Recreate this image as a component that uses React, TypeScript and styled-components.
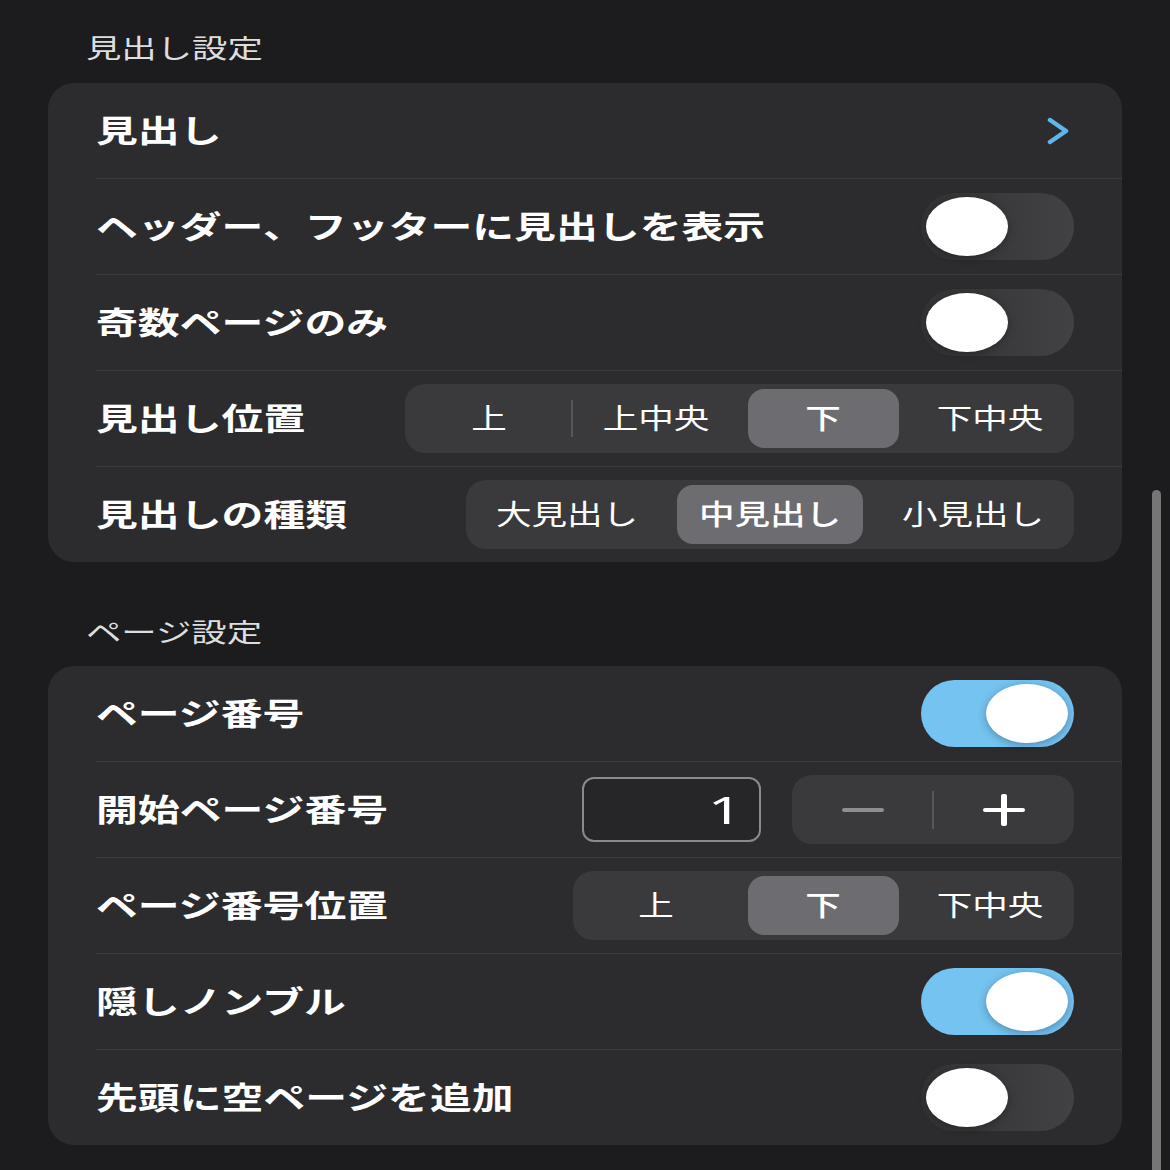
import React from 'react'
import styled, { createGlobalStyle } from 'styled-components'

const GlobalStyle = createGlobalStyle`
body{
    margin:0;
    background:#1c1c1e;
    font-family:"Noto Sans CJK JP","Noto Sans",sans-serif;
    color:#fff;
}
`

type Option = { label: string; active?: boolean; divider?: boolean }

function Toggle({ on }: { on: boolean }) {
    return (
        <Track $on={on}>
            <Knob />
        </Track>
    )
}

function SegmentedControl({ width, options }: { width: number; options: Option[] }) {
    return (
        <Segmented $width={width}>
            {options.map((o) => (
                <Segment key={o.label} $active={o.active} $divider={o.divider}>
                    <SegmentText>{o.label}</SegmentText>
                </Segment>
            ))}
        </Segmented>
    )
}

function Chevron() {
    return (
        <ChevronIcon width="24" height="28" viewBox="0 0 24 28">
            <polyline points="4,3 20,14 4,25" fill="none" stroke="#62b5ea" strokeWidth="4.5" strokeLinecap="round" strokeLinejoin="round" />
        </ChevronIcon>
    )
}

function App() {
    return (
        <Page>
            <GlobalStyle />
            <SectionTitle $top={29} $bottom={18}>
                <Stretch>見出し設定</Stretch>
            </SectionTitle>
            <Card>
                <Row>
                    <Label>見出し</Label>
                    <Chevron />
                </Row>
                <Row>
                    <Label>ヘッダー、フッターに見出しを表示</Label>
                    <Toggle on={false} />
                </Row>
                <Row>
                    <Label>奇数ページのみ</Label>
                    <Toggle on={false} />
                </Row>
                <Row>
                    <Label>見出し位置</Label>
                    <SegmentedControl
                        width={669}
                        options={[
                            { label: '上' },
                            { label: '上中央', divider: true },
                            { label: '下', active: true },
                            { label: '下中央' },
                        ]}
                    />
                </Row>
                <Row>
                    <Label>見出しの種類</Label>
                    <SegmentedControl
                        width={608}
                        options={[
                            { label: '大見出し' },
                            { label: '中見出し', active: true },
                            { label: '小見出し' },
                        ]}
                    />
                </Row>
            </Card>

            <SectionTitle $top={51} $bottom={17}>
                <Stretch>ページ設定</Stretch>
            </SectionTitle>
            <Card>
                <Row>
                    <Label>ページ番号</Label>
                    <Toggle on={true} />
                </Row>
                <Row>
                    <Label>開始ページ番号</Label>
                    <NumberGroup>
                        <NumberField>
                            <NumberText>1</NumberText>
                        </NumberField>
                        <Stepper>
                            <StepButton>
                                <svg width="42" height="6" viewBox="0 0 42 6">
                                    <rect x="0" y="1" width="42" height="4" rx="2" fill="#8e8e93" />
                                </svg>
                            </StepButton>
                            <StepButton $divider>
                                <svg width="42" height="32" viewBox="0 0 42 32">
                                    <rect x="0" y="14" width="42" height="4" rx="2" fill="#fff" />
                                    <rect x="18" y="0" width="6" height="32" rx="2" fill="#fff" />
                                </svg>
                            </StepButton>
                        </Stepper>
                    </NumberGroup>
                </Row>
                <Row>
                    <Label>ページ番号位置</Label>
                    <SegmentedControl
                        width={501}
                        options={[
                            { label: '上' },
                            { label: '下', active: true },
                            { label: '下中央' },
                        ]}
                    />
                </Row>
                <Row>
                    <Label>隠しノンブル</Label>
                    <Toggle on={true} />
                </Row>
                <Row>
                    <Label>先頭に空ページを追加</Label>
                    <Toggle on={false} />
                </Row>
            </Card>
            <ScrollThumb />
        </Page>
    )
}

export default App

const Page = styled.div`
position:relative;
width:1170px;
min-height:1170px;
padding:0 48px;
box-sizing:border-box;
overflow:hidden;
`
const Stretch = styled.span`
display:inline-block;
white-space:nowrap;
transform:scaleX(1.36);
transform-origin:left center;
`
const SectionTitle = styled.div<{ $top: number; $bottom: number }>`
padding:${(p) => p.$top}px 0 ${(p) => p.$bottom}px 38px;
font-size:26px;
line-height:36px;
color:#dedede;
`
const Card = styled.div`
background:#2c2c2e;
border-radius:26px;
overflow:hidden;
`
const Row = styled.div`
display:flex;
align-items:center;
justify-content:space-between;
height:95px;
margin-left:48px;
padding-right:48px;
& + &{
    border-top:1px solid #3b3b3e;
}
`
const Label = styled.span`
display:inline-block;
white-space:nowrap;
padding-bottom:5px;
font-size:31px;
font-weight:700;
color:#fff;
transform:scaleX(1.35);
transform-origin:left center;
`
const ChevronIcon = styled.svg`
margin-right:4px;
`
const Track = styled.div<{ $on: boolean }>`
display:flex;
align-items:center;
justify-content:${(p) => (p.$on ? 'flex-end' : 'flex-start')};
width:153px;
height:67px;
padding:0 6px 0 5px;
box-sizing:border-box;
border-radius:34px;
flex-shrink:0;
background:${(p) => (p.$on ? '#75c3f1' : 'linear-gradient(90deg,#333336 0%,#3d3d40 70%,#424245 100%)')};
`
const Knob = styled.div`
width:82px;
height:59px;
border-radius:50%;
background:#fff;
box-shadow:0 2px 8px rgba(0,0,0,0.3);
`
const Segmented = styled.div<{ $width: number }>`
display:flex;
width:${(p) => p.$width}px;
height:69px;
border-radius:20px;
background:#3a3a3c;
flex-shrink:0;
`
const Segment = styled.div<{ $active?: boolean; $divider?: boolean }>`
position:relative;
flex:1;
margin:5px 8px;
display:flex;
align-items:center;
justify-content:center;
border-radius:16px;
background:${(p) => (p.$active ? '#6c6c71' : 'transparent')};
font-size:28px;
font-weight:${(p) => (p.$active ? 500 : 400)};
&::before{
    content:${(p) => (p.$divider ? "''" : 'none')};
    position:absolute;
    left:-9px;
    top:11px;
    bottom:11px;
    width:2px;
    background:#57575b;
}
`
const SegmentText = styled.span`
display:inline-block;
white-space:nowrap;
padding-bottom:3px;
transform:scaleX(1.27);
`
const NumberGroup = styled.div`
display:flex;
align-items:center;
gap:31px;
`
const NumberField = styled.div`
display:flex;
align-items:center;
justify-content:flex-end;
width:179px;
height:65px;
padding-right:17px;
box-sizing:border-box;
border:2px solid #8a8a8e;
border-radius:12px;
background:#262628;
`
const NumberText = styled.span`
display:inline-block;
font-family:"Noto Sans",sans-serif;
font-size:39px;
line-height:1;
padding-bottom:2px;
transform:scaleX(1.55);
transform-origin:right center;
`
const Stepper = styled.div`
display:flex;
width:282px;
height:69px;
border-radius:20px;
background:#3a3a3c;
`
const StepButton = styled.div<{ $divider?: boolean }>`
position:relative;
flex:1;
display:flex;
align-items:center;
justify-content:center;
&::before{
    content:${(p) => (p.$divider ? "''" : 'none')};
    position:absolute;
    left:-1px;
    top:16px;
    bottom:15px;
    width:2px;
    background:#57575b;
}
`
const ScrollThumb = styled.div`
position:absolute;
right:9px;
top:490px;
width:9px;
height:720px;
border-radius:5px;
background:#767676;
`
